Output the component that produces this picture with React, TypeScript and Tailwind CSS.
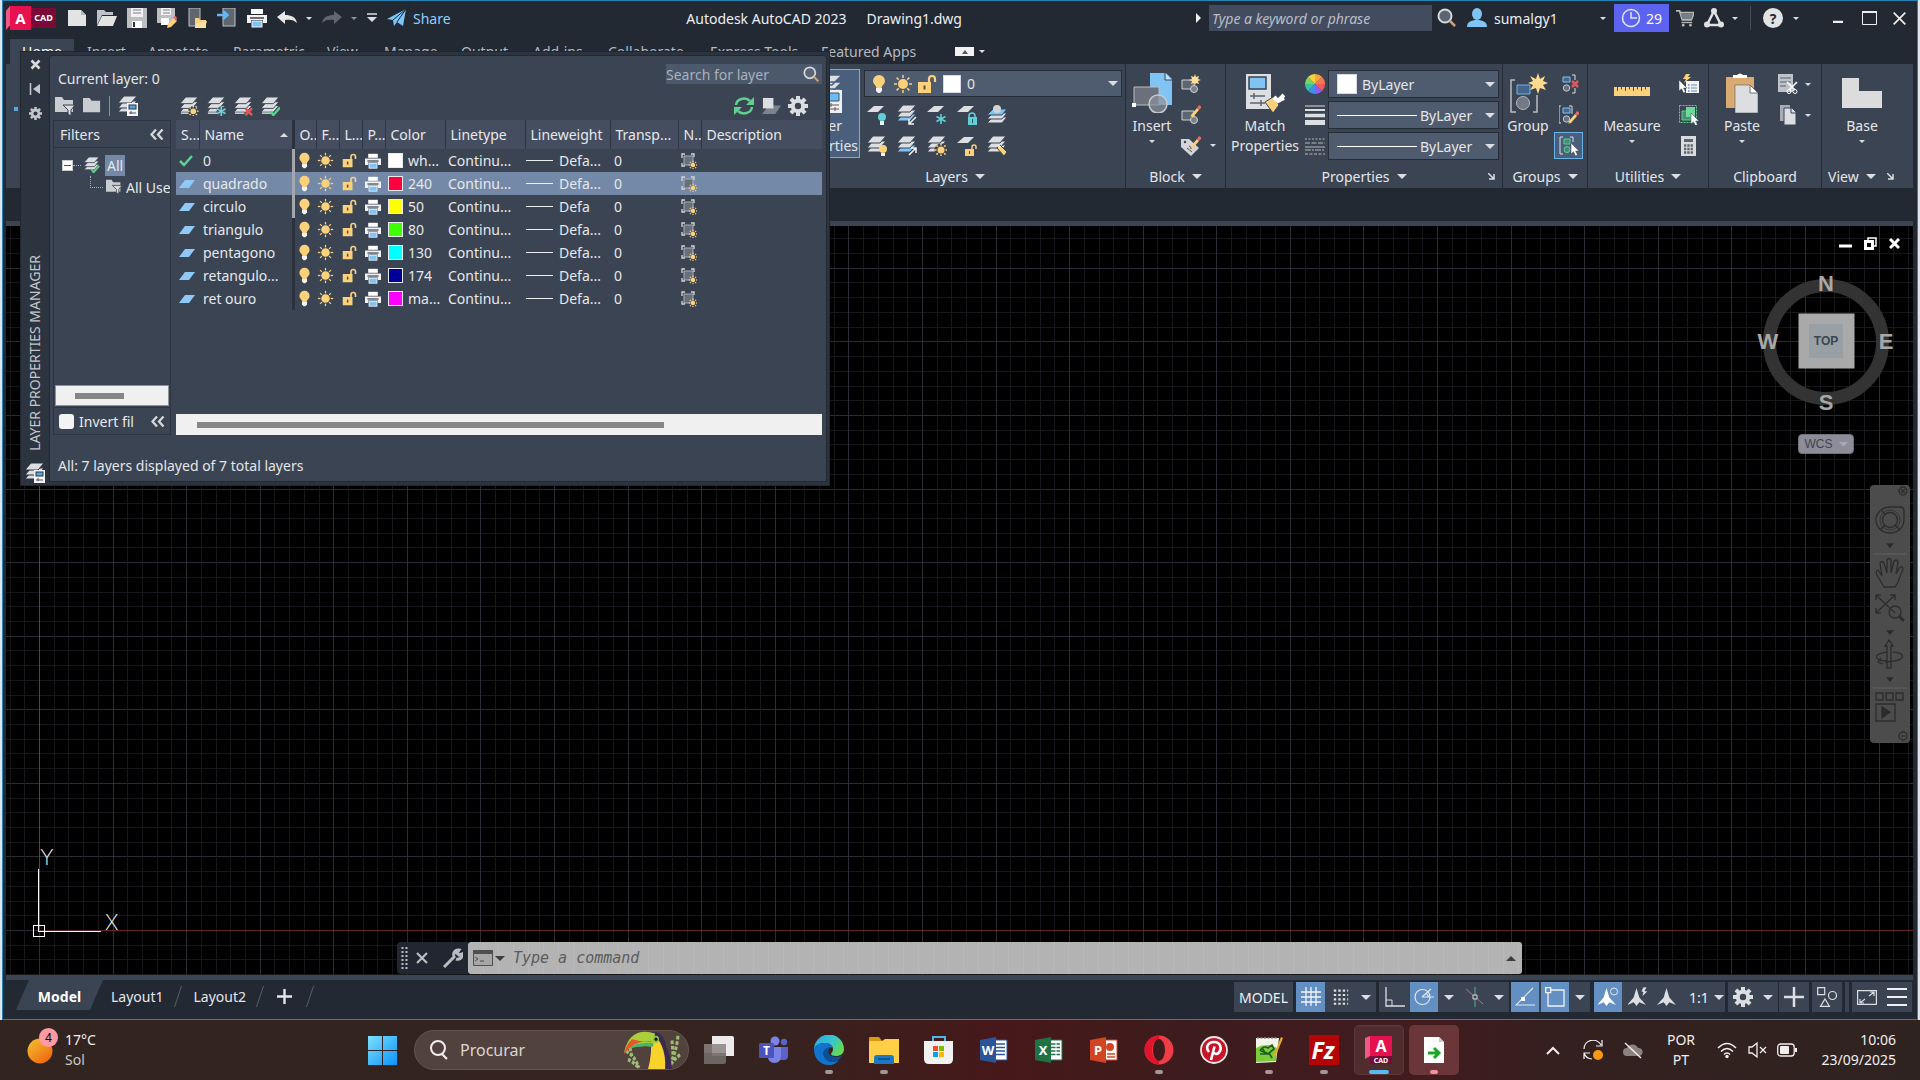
import type { ReactNode } from "react";

const FONT = "font-['Noto_Sans','Open_Sans',sans-serif]";
const LIGHT = "#dcdee1";
const AMBER = "#fcd17c";
const SKY = "#80c4f6";
const PANEL = "#3b4453";

type IconProps = { size?: number; w?: number; h?: number; vb?: string; className?: string; children?: ReactNode };

function Icon({ size = 20, w, h, vb = "0 0 20 20", className = "", children }: IconProps) {
  return (
    <svg width={w ?? size} height={h ?? size} viewBox={vb} className={`shrink-0 ${className}`} fill="none" aria-hidden="true">
      {children}
    </svg>
  );
}

function Caret({ w = 10, color = LIGHT, className = "" }: { w?: number; color?: string; className?: string }) {
  return (
    <svg width={w} height={w / 2} viewBox="0 0 10 5" className={`shrink-0 ${className}`} aria-hidden="true">
      <path d="M0 0h10L5 5z" fill={color} />
    </svg>
  );
}

/* ---------- shared glyphs ---------- */

function Sheets({ top = LIGHT, mid = LIGHT, low = LIGHT, bg = PANEL }: { top?: string; mid?: string; low?: string; bg?: string }) {
  return (
    <g stroke={bg} strokeWidth="1">
      <path d="M6 9h13l-6 7H0z" fill={low} />
      <path d="M6 5h13l-6 7H0z" fill={mid} />
      <path d="M6 0h13l-6 7H0z" fill={top} />
    </g>
  );
}

function Bulb({ size = 18 }: { size?: number }) {
  return (
    <Icon size={size}>
      <path d="M10 1a6 6 0 0 1 6 6c0 3-3 4-3.5 7h-5C7 11 4 10 4 7a6 6 0 0 1 6-6z" fill={AMBER} />
      <path d="M7 14h6v3l-2 2H9l-2-2z" fill="#f3f3f3" />
    </Icon>
  );
}

function SunShape({ cx = 10, cy = 10, r = 5, far = 9 }: { cx?: number; cy?: number; r?: number; far?: number }) {
  const rays = [0, 45, 90, 135, 180, 225, 270, 315];
  return (
    <g>
      <circle cx={cx} cy={cy} r={r} fill={AMBER} />
      {rays.map((a) => (
        <path key={a} d={`M${cx + r + 1} ${cy}H${cx + far}`} transform={`rotate(${a} ${cx} ${cy})`} stroke={AMBER} strokeWidth="1.5" />
      ))}
    </g>
  );
}

function Sun({ size = 18 }: { size?: number }) {
  return (
    <Icon size={size}>
      <SunShape />
    </Icon>
  );
}

function OpenLock({ size = 18 }: { size?: number }) {
  return (
    <Icon size={size}>
      <path d="M12 9V5a3 3 0 0 1 6 0v3" stroke={AMBER} strokeWidth="2.2" />
      <rect x="1" y="8" width="13" height="11" fill={AMBER} />
      <path d="M7.5 11.500v4" stroke="#5b4d36" strokeWidth="2" />
    </Icon>
  );
}

function Printer({ size = 18 }: { size?: number }) {
  return (
    <Icon size={size}>
      <rect x="4" y="1" width="12" height="5" fill="#fff" />
      <path d="M0 7h20v8h-4v-3H4v3H0z" fill="#f1f2f4" />
      <path d="M3 10h14" stroke="#39424f" strokeWidth="1.5" />
      <rect x="5" y="13" width="10" height="6" fill={SKY} stroke="#f1f2f4" />
    </Icon>
  );
}

function Viewport() {
  return (
    <Icon size={16} vb="0 0 16 16">
      <path d="M3 3h9v9H3z" fill="#68707c" stroke="#a9aeb5" />
      <path d="M1 5V1h3M10 1h3v3M1 10v3h3" stroke="#d4d6d9" strokeWidth="1.3" />
      <SunShape cx={12} cy={12} r={2.2} far={4.200} />
    </Icon>
  );
}

function Gear({ size = 20, color = LIGHT }: { size?: number; color?: string }) {
  const teeth = [0, 45, 90, 135, 180, 225, 270, 315];
  return (
    <Icon size={size}>
      {teeth.map((a) => (
        <rect key={a} x="8" y="0" width="4" height="5" fill={color} transform={`rotate(${a} 10 10)`} />
      ))}
      <circle cx="10" cy="10" r="5.2" stroke={color} strokeWidth="4" />
    </Icon>
  );
}

function Magnifier({ size = 20 }: { size?: number }) {
  return (
    <Icon size={size}>
      <circle cx="8" cy="8" r="6.5" fill="#5b6472" stroke="#d5d8dc" strokeWidth="2" />
      <path d="m13 13 5 5" stroke="#c9a276" strokeWidth="2.5" />
    </Icon>
  );
}

function Cursor({ x = 0, y = 0 }: { x?: number; y?: number }) {
  return <path transform={`translate(${x} ${y})`} d="M0 0v11l2.5-2.2L4.5 13l2-1-1.8-4H8z" fill="#fff" stroke="#39424f" strokeWidth=".5" />;
}

function Pencil() {
  return (
    <g>
      <path d="m9 15 1-3 6-7 2 2-6 7z" fill={AMBER} />
      <path d="m16 5 2-3 3 2-3 3z" fill="#e8695f" />
      <path d="m9 15 .7-2 1.3 1.2z" fill="#5b4d36" />
    </g>
  );
}

function PropsCard() {
  return (
    <g>
      <rect x="9" y="7" width="11" height="13" fill="#f5f5f5" />
      <rect x="11" y="9" width="7" height="4" fill="#57a6e0" stroke="#2c3441" />
      <path d="M11 17h7M13 15v3" stroke="#4c5461" />
    </g>
  );
}

/* ---------- title bar ---------- */

function IconButton({ label, className = "", children }: { label: string; className?: string; children: ReactNode }) {
  return (
    <button type="button" aria-label={label} className={`flex shrink-0 items-center justify-center ${className}`}>
      {children}
    </button>
  );
}

function AppLogo() {
  return (
    <div className="flex h-6 w-[50px] shrink-0 items-stretch">
      <div className="w-1 bg-[#f0588a] [clip-path:polygon(0_20%,100%_0,100%_80%,0_100%)]" />
      <div className="flex w-[21px] items-center justify-center bg-[#e61250] text-[15px] font-bold text-white">A</div>
      <div className="my-0.5 flex flex-1 items-center justify-center bg-[#790a35] text-[9px] font-bold text-white">CAD</div>
    </div>
  );
}

function TitleBar() {
  return (
    <div className="flex h-[34px] shrink-0 items-center pr-[11px] pl-[3px]">
      <AppLogo />
      <div className="ml-[11px] flex items-center gap-[10px]">
        <IconButton label="New">
          <Icon><path d="M1 2h13l5 5v11H1z" fill="#e3e3e3" /><path d="M14 2v5h5" fill="#b5b8bc" /></Icon>
        </IconButton>
        <IconButton label="Open">
          <Icon><path d="M0 2h7l2 2h7v3H5L0 17z" fill="#bfc2c5" /><path d="M5 8h15l-4 10H0z" fill="#e3e3e3" /></Icon>
        </IconButton>
        <IconButton label="Save">
          <Icon><path d="M0 0h20v20H0z" fill="#bcbec1" /><path d="M4 0h12v9H4z" fill="#f2f2f2" /><path d="M6 2h8M6 5h8" stroke="#7c8086" /><path d="M5 13h10v7H5z" fill="#fff" /><path d="M7 14v5" stroke="#2c3441" strokeWidth="2" /></Icon>
        </IconButton>
        <IconButton label="Save As">
          <Icon><path d="M0 0h18v15H0z" fill="#bcbec1" /><path d="M4 0h10v7H4z" fill="#f2f2f2" /><path d="M6 2h7M6 5h7" stroke="#7c8086" /><path d="M4 10h8v7H4z" fill="#fff" /><path d="m10 20 1-4 6-6 3 3-6 6z" fill={AMBER} /><path d="m16 9 3-1 1 3-1 2z" fill="#e8695f" /></Icon>
        </IconButton>
        <IconButton label="Open from Web and Mobile">
          <Icon><rect x="2" y="0" width="11" height="18" fill="#5f6670" stroke="#bcbec1" /><path d="M8 10h4l1 2h6v8H8z" fill={AMBER} /><path d="m10 15 10-2-2 7H8z" fill="#ffe1a4" /></Icon>
        </IconButton>
        <IconButton label="Save to Web and Mobile">
          <Icon><rect x="6" y="0" width="12" height="18" fill="#5f6670" stroke="#bcbec1" /><path d="M0 7h9M6 3l4.5 4L6 11" stroke="#63b7f2" strokeWidth="2.5" /></Icon>
        </IconButton>
        <IconButton label="Plot"><Printer size={20} /></IconButton>
        <IconButton label="Undo">
          <Icon><path d="M8 3v4c6 0 11 2 12 8-3-3-6-4-12-3v4L0 9z" fill="#e8e8e8" /></Icon>
        </IconButton>
      </div>
      <Caret w={6} className="ml-[9px]" />
      <IconButton label="Redo" className="ml-[10px]">
        <Icon><path d="M12 3v4C6 7 1 9 0 15c3-3 6-4 12-3v4l8-7z" fill="#62676f" /></Icon>
      </IconButton>
      <Caret w={6} color="#8f949c" className="ml-[9px]" />
      <IconButton label="Customize Quick Access Toolbar" className="ml-[10px]">
        <Icon size={10} vb="0 0 10 10"><path d="M0 1h10" stroke={LIGHT} strokeWidth="1.5" /><path d="M0 4h10L5 9z" fill={LIGHT} /></Icon>
      </IconButton>
      <button type="button" className="ml-[10px] flex items-center gap-[6px] text-[#8fd0fb]">
        <Icon><path d="M0 11 19 1l-3 17-6-4-3 4-1-6z" fill="#7cc5f8" /><path d="m6 12 13-11-9 13" stroke="#222933" /></Icon>
        Share
      </button>
      <div className="min-w-0 flex-1" />
      <div className="flex shrink-0 gap-5 pr-[234px] text-[#eceef0]">
        <span>Autodesk AutoCAD 2023</span>
        <span>Drawing1.dwg</span>
      </div>
      <Icon w={5} h={10} vb="0 0 5 10"><path d="M0 0v10l5-5z" fill="#eceef0" /></Icon>
      <input aria-label="Search" placeholder="Type a keyword or phrase" className="ml-2 h-[26px] w-[223px] bg-[#434c5e] px-[3px] italic text-white outline-none placeholder:text-[#b9bec8]" />
      <IconButton label="Search" className="ml-[5px]"><Magnifier /></IconButton>
      <button type="button" className="ml-[10px] flex items-center gap-[7px] text-[#eceef0]">
        <Icon><ellipse cx="10" cy="6" rx="5" ry="6" fill={SKY} /><path d="M0 19c0-5 4-7 10-7s10 2 10 7z" fill={SKY} /></Icon>
        <span className="w-[99px] text-left">sumalgy1</span>
        <Caret w={6} />
      </button>
      <button type="button" className="ml-[8px] flex h-7 w-[55px] items-center justify-center gap-[5px] bg-[#5c63ee] text-white">
        <Icon><circle cx="10" cy="10" r="8.5" stroke="#e4e5fd" strokeWidth="1.5" /><path d="M10 4v6h6" stroke="#e4e5fd" strokeWidth="1.5" /></Icon>
        29
      </button>
      <IconButton label="App Store" className="ml-[7px]">
        <Icon w={18} h={18}><path d="M0 2h4l3 10h10l3-8H5" stroke="#b8b8b8" strokeWidth="2" /><path d="M5 5h14l-2 6H7z" fill="#777d85" /><path d="M6 15h12" stroke="#b8b8b8" strokeWidth="1.5" /><circle cx="8" cy="18" r="1.5" fill="#b8b8b8" /><circle cx="16" cy="18" r="1.5" fill="#b8b8b8" /></Icon>
      </IconButton>
      <IconButton label="Autodesk" className="ml-[10px]">
        <Icon><path d="M10 3 3 17h14z" stroke="#dfe1e3" strokeWidth="2.5" /><circle cx="10" cy="3" r="3" fill="#dfe1e3" /><circle cx="3" cy="16.5" r="3" fill="#dfe1e3" /><circle cx="17" cy="16.5" r="3" fill="#dfe1e3" /></Icon>
      </IconButton>
      <Caret w={6} className="ml-[8px]" />
      <div className="ml-[12px] h-6 w-px bg-[#454d59]" />
      <IconButton label="Help" className="ml-[12px] size-5 rounded-full bg-[#e2e3e5] font-bold text-[#222933]">?</IconButton>
      <Caret w={6} className="ml-[10px]" />
      <IconButton label="Minimize" className="ml-[34px]"><Icon size={10} vb="0 0 10 10"><path d="M0 9h10" stroke="#eee" strokeWidth="2.5" /></Icon></IconButton>
      <IconButton label="Maximize" className="ml-[19px]"><Icon w={15} h={14} vb="0 0 15 14"><path d="M.5 1v12.500h14V1" stroke="#eee" /><path d="M0 1h15" stroke="#eee" strokeWidth="2" /></Icon></IconButton>
      <IconButton label="Close" className="ml-[16px]"><Icon size={13} vb="0 0 13 13"><path d="m.7.7 11.600 11.600M12.300.7.7 12.300" stroke="#eee" strokeWidth="1.700" /></Icon></IconButton>
    </div>
  );
}

const TABS: [string, string][] = [
  ["Insert", "w-[61px]"],
  ["Annotate", "w-[85px]"],
  ["Parametric", "w-[94px]"],
  ["View", "w-[57px]"],
  ["Manage", "w-[77px]"],
  ["Output", "w-[72px]"],
  ["Add-ins", "w-[75px]"],
  ["Collaborate", "w-[102px]"],
  ["Express Tools", "w-[111px]"],
  ["Featured Apps", "w-[134px]"],
];

function RibbonTabs() {
  return (
    <div className="mt-[4px] flex h-[25px] shrink-0 items-stretch pl-[7px] text-[#b5bac2]">
      <button type="button" className="mr-[13px] w-[64px] bg-[#3b4453] text-white">Home</button>
      {TABS.map(([label, width]) => (
        <button key={label} type="button" className={`${width} shrink-0 text-left`}>{label}</button>
      ))}
      <div className="flex items-center gap-[5px]">
        <IconButton label="Minimize ribbon" className="h-[9px] w-[19px] bg-[#f1f1f1]">
          <svg width="6" height="4" viewBox="0 0 6 4" aria-hidden="true"><path d="M0 4h6L3 0z" fill="#555" /></svg>
        </IconButton>
        <Caret w={6} />
      </div>
    </div>
  );
}

/* ---------- ribbon ---------- */

function Launcher({ className = "" }: { className?: string }) {
  return (
    <Icon size={7} vb="0 0 7 7" className={className}><path d="m0 0 6 6M6 1v5H1" stroke={LIGHT} strokeWidth="1.5" /></Icon>
  );
}

function RibbonPanel({ title, caret = true, launcher = "", titleClass = "justify-center", width, last = false, children }: { title: string; caret?: boolean; launcher?: string; titleClass?: string; width: string; last?: boolean; children: ReactNode }) {
  return (
    <section className={`relative flex shrink-0 flex-col ${width} ${last ? "" : "border-r border-[#252c37]"}`}>
      <div className="flex h-[100px] pt-[6px]">{children}</div>
      <div className={`flex h-[24px] items-center gap-[7px] text-[#e4e6e9] ${titleClass}`}>
        {title}
        {caret && <Caret />}
        {launcher && <Launcher className={launcher} />}
      </div>
    </section>
  );
}

function BigButton({ icon, lines, caret = false, className = "" }: { icon: ReactNode; lines: string[]; caret?: boolean; className?: string }) {
  return (
    <button type="button" className={`flex flex-col items-center self-start text-[#e4e6e9] ${className}`}>
      <span className="flex h-[46px] items-center">{icon}</span>
      {lines.map((l) => (
        <span key={l} className="leading-5">{l}</span>
      ))}
      {caret && <Caret w={6} className="mt-[4px]" />}
    </button>
  );
}

const layerTools: ReactNode[] = [
  <><path d="M7 1h10l-6 6H0z" fill={LIGHT} /><circle cx="15" cy="12" r="4" fill="#5fd0d8" /><path d="M13 16h4v4h-4z" fill="#e8f8f8" /></>,
  <><Sheets mid={LIGHT} low={SKY} /><path d="m19 12-7 7M12 14v5h5" stroke="#f2f2f2" strokeWidth="1.5" /></>,
  <><path d="M7 1h10l-6 6H0z" fill={LIGHT} /><path d="M14 9v10M9.5 11.500l9 5M9.5 16.500l9-5" stroke="#5fd0d8" strokeWidth="1.6" /></>,
  <><path d="M7 1h10l-6 6H0z" fill={LIGHT} /><path d="M12 13v-2a3 3 0 0 1 6 0v2" stroke="#5fd0d8" strokeWidth="1.5" /><path d="M11 12h9v8h-9z" fill="#5fd0d8" /><path d="M15.5 14v4" stroke="#2b4d55" /></>,
  <><path d="M6 12h14l-5 6H0z" fill={LIGHT} stroke={PANEL} /><path d="M6 8h14l-5 6H0z" fill={LIGHT} stroke={PANEL} /><path d="M6 4h14l-5 6H0z" fill={SKY} stroke={PANEL} /><circle cx="10" cy="4" r="4" fill="#d0d3d6" /></>,
  <><Sheets /><circle cx="16" cy="13" r="4" fill={AMBER} /><path d="M14 17h4v3h-4z" fill="#f2f2f2" /></>,
  <><Sheets low={SKY} /><path d="m12 19 7-7M19 17v-5h-5" stroke="#f2f2f2" strokeWidth="1.5" /></>,
  <><Sheets /><circle cx="14" cy="14" r="6.5" fill={PANEL} /><SunShape cx={14} cy={14} r={3.500} far={6.500} /></>,
  <><path d="M7 1h10l-6 6H0z" fill={LIGHT} /><path d="M15 13v-2a2 2 0 0 1 4 0v2" stroke={AMBER} strokeWidth="1.5" /><path d="M8 13h9v7H8z" fill={AMBER} /><path d="M12.5 15v3" stroke="#5b4d36" /></>,
  <><Sheets /><path d="m10 12 3-3 7 7-3 4z" fill={AMBER} stroke={PANEL} /><path d="m11 9 2 2" stroke="#fff" strokeWidth="2" /></>,
];

function LayersPanel() {
  return (
    <RibbonPanel title="Layers" width="w-[341px]">
      <BigButton
        className="mt-[-1px] ml-[3px] h-[89px] w-[72px] border border-[#6bb3e6] bg-[#4a5f7b]"
        icon={<Icon size={40} vb="0 0 40 40"><path d="M14 16h24L28 26H4zM14 9h24L28 19H4zM14 2h24L28 12H4z" fill={LIGHT} stroke="#4a5f7b" strokeWidth="1.5" /><path d="M20 17h18v23H20z" fill="#f1f1f1" /><path d="M22 20h13v8H22z" fill="#6cbcf5" stroke="#44546b" /><path d="M23 32h12M23 36h12M27 30v4M31 34v4" stroke="#5a5a5a" /></Icon>}
        lines={["Layer", "Properties"]}
      />
      <div className="ml-1 flex-1 pr-[3px]">
        <div className="flex h-[27px] items-center border border-[#252c37] bg-[#4f5b6f] pr-[3px] pl-[4px]">
          <Bulb size={20} />
          <span className="ml-[4px] flex"><Sun size={20} /></span>
          <span className="ml-[4px] flex"><OpenLock size={20} /></span>
          <span className="ml-[6px] size-[18px] border border-[#d8d8e6] bg-white" />
          <select aria-label="Layer" className="ml-[6px] flex-1 appearance-none bg-transparent text-[#e4e6e9] outline-none"><option>0</option></select>
          <Caret />
        </div>
        <div className="mt-[8px] ml-[3px] grid w-[150px] grid-cols-5 gap-y-[11px]">
          {layerTools.map((g, i) => (
            <IconButton key={i} label={`Layer tool ${i + 1}`} className="justify-start!"><Icon>{g}</Icon></IconButton>
          ))}
        </div>
      </div>
    </RibbonPanel>
  );
}

function BlockPanel() {
  const blockBase = <><path d="M1 6h12v9H1z" fill="#5d6571" stroke="#d0d2d5" /><circle cx="13" cy="15" r="3.5" fill="#7a818b" stroke="#d0d2d5" /></>;
  return (
    <RibbonPanel title="Block" width="w-[100px]">
      <BigButton
        className="ml-[6px] w-10"
        caret
        icon={<Icon size={40} vb="0 0 40 40"><path d="M18 0h16l6 6v26H18z" fill={SKY} /><path d="M33 0v7h7" fill="#bfe1fa" stroke={PANEL} /><path d="M2 14h25v18H2z" fill="#6a717d" stroke="#babdc2" /><circle cx="26" cy="31" r="9" fill="#8a919b" fillOpacity=".7" stroke="#c6c8cc" strokeWidth="1.5" /><path d="M0 30h4v4H0z" fill="#fff" /></Icon>}
        lines={["Insert"]}
      />
      <div className="ml-[9px] flex flex-col gap-[11px] pt-[4px]">
        <IconButton label="Create Block"><Icon>{blockBase}<path d="m14 0 1 3 3-1-1 3 3 1-3 1 1 3-3-1-1 2-1-2-3 1 1-3-3-1 3-1-1-3 3 1z" fill="#ffdf95" /></Icon></IconButton>
        <IconButton label="Edit Block"><Icon>{blockBase}<g transform="translate(0 -2)"><Pencil /></g></Icon></IconButton>
        <IconButton label="Edit Attributes"><Icon><path d="M0 3h8l10 9-8 8L0 11z" fill="#d3d5d8" /><circle cx="4" cy="6" r="1.2" fill={PANEL} /><path d="m6 12 5 4M8 10l3 2" stroke="#4c5461" /><g transform="translate(0 -2)"><Pencil /></g></Icon></IconButton>
      </div>
      <Caret w={6} className="mt-[74px] ml-[9px]" />
    </RibbonPanel>
  );
}

function PropCombo({ label, swatch = false }: { label: string; swatch?: boolean }) {
  return (
    <div className="flex h-[28px] items-center border border-[#252c37] bg-[#4f5b6f] pr-[3px] pl-[8px]">
      {swatch ? <span className="size-5 border border-[#d8d8e6] bg-white" /> : <span className="h-px w-20 bg-white" />}
      <select aria-label={label} className={`flex-1 appearance-none bg-transparent text-[#e4e6e9] outline-none ${swatch ? "ml-[5px]" : "ml-[3px]"}`}><option>ByLayer</option></select>
      <Caret />
    </div>
  );
}

const WHEEL = ["#f9a03f", "#f7784a", "#ef5a5a", "#8e5cf0", "#3f8df0", "#35c0a0", "#7fd060", "#f4d03f"];

function PropertiesPanel() {
  return (
    <RibbonPanel title="Properties" width="w-[277px]" launcher="absolute right-[7px]">
      <BigButton
        className="w-[78px]"
        icon={<Icon size={40} vb="0 0 40 40"><path d="M1 1h25v35H1z" fill={LIGHT} /><path d="M4 4h17v12H4z" fill={SKY} stroke="#39424f" strokeWidth="1.5" /><path d="M5 23h15M5 30h15M9 20v6M16 27v6" stroke="#5b626d" strokeWidth="1.5" /><path d="m20 29 8-5 6 8-6 8z" fill={AMBER} stroke={PANEL} /><path d="m29 24 4 4 6-3M33 28l6-6" stroke="#fff" strokeWidth="4" /></Icon>}
        lines={["Match", "Properties"]}
      />
      <div className="ml-px flex flex-col gap-[11px] pt-[4px]">
        <Icon>
          {WHEEL.map((c, i) => (
            <path key={c} d="M10 10V0a10 10 0 0 1 7.1 2.9z" fill={c} transform={`rotate(${i * 45} 10 10)`} />
          ))}
        </Icon>
        <Icon><path d="M0 1h20" stroke={LIGHT} /><path d="M0 5h20" stroke={LIGHT} strokeWidth="2" /><path d="M0 10.500h20" stroke={LIGHT} strokeWidth="3.5" /><path d="M0 17.500h20" stroke={LIGHT} strokeWidth="5" /></Icon>
        <Icon><path d="M0 3h20" stroke="#b4b8be" strokeDasharray="2 1.5" /><path d="M0 7h20" stroke="#b4b8be" strokeDasharray="5 1.5" /><path d="M0 11h20" stroke="#b4b8be" /><path d="M0 14h20" stroke="#b4b8be" strokeDasharray="6 1 2 1" /><path d="M0 18h20" stroke="#b4b8be" strokeDasharray="3 1.5" /></Icon>
      </div>
      <div className="ml-[3px] flex flex-1 flex-col gap-[3px] pr-[3px]">
        <PropCombo label="Object color" swatch />
        <PropCombo label="Lineweight" />
        <PropCombo label="Linetype" />
      </div>
    </RibbonPanel>
  );
}

function GroupsPanel() {
  const pair = (c: string) => (
    <g>
      <path d="M4 3h7v5H4z" fill={c} stroke={SKY} />
      <circle cx="7.5" cy="14" r="3.2" fill="#6a717d" stroke="#c6c8cc" />
    </g>
  );
  return (
    <RibbonPanel title="Groups" width="w-[85px]">
      <BigButton
        className="ml-1 w-[42px]"
        icon={<Icon size={40} vb="0 0 40 40"><path d="M7 7H3v32h5M25 39h4V22" stroke="#babdc2" strokeWidth="1.5" /><path d="M9 12h13v9H9z" fill="#46658a" stroke="#70b4e6" /><circle cx="15" cy="30" r="6.5" fill="#737a85" stroke="#b4b8be" /><path d="m30 0 2 6 5-3-2 5 5 2-5 2 3 5-6-2-2 6-2-6-6 2 3-5-5-2 5-2-3-5 6 3z" fill="#ffda8c" /></Icon>}
        lines={["Group"]}
      />
      <div className="ml-[5px] flex flex-col items-center pt-px">
        <IconButton label="Ungroup" className="h-[26px]"><Icon>{pair("#46658a")}<path d="M13 1h3v5M16 14v5h-3" stroke={LIGHT} /><path d="m13 7 6 6M19 7l-6 6" stroke="#e05a5a" strokeWidth="2.5" /></Icon></IconButton>
        <IconButton label="Group Edit" className="mt-[5px] h-[26px]"><Icon>{pair("#46658a")}<path d="M2 1H0v17h2M10 1h3v8" stroke={LIGHT} /><g transform="translate(0 4)"><Pencil /></g></Icon></IconButton>
        <IconButton label="Group Selection On/Off" className="mt-[4px] h-[27px] w-[29px] border border-[#6bb3e6] bg-[#4a5f7b]">
          <Icon><path d="M4 1H1v17h3M11 1h3v5" stroke={LIGHT} /><path d="M5 3h6v5H5z" fill="#3f8f6c" stroke="#62c99a" /><circle cx="8" cy="13.5" r="3" fill="#3f8f6c" stroke="#62c99a" /><Cursor x={12} y={7} /></Icon>
        </IconButton>
      </div>
    </RibbonPanel>
  );
}

function UtilitiesPanel() {
  return (
    <RibbonPanel title="Utilities" width="w-[121px]">
      <BigButton
        className="ml-4 w-14"
        caret
        icon={<Icon w={36} h={9} vb="0 0 36 9" className="mb-[4px]"><path d="M0 0h36v9H0z" fill={AMBER} /><path d="M3.5 0v4M7.5 0v2.500M11.5 0v4M15.5 0v2.500M19.5 0v4M23.5 0v2.500M27.5 0v4M31.5 0v2.500" stroke="#5b4d36" /></Icon>}
        lines={["Measure"]}
      />
      <div className="ml-[19px] flex flex-col gap-[11px] pt-[4px]">
        <IconButton label="Quick Select"><Icon><path d="M7 7h13v12H7z" fill="#f4f4f4" /><path d="M12 11h6M12 14h6M12 17h6" stroke="#5b8fc0" /><path d="M9 11h1.500M9 14h1.500M9 17h1.500" stroke="#5b8fc0" strokeWidth="1.5" /><path d="m7 0-3 5h3L5 9l7-6H9l2-3z" fill={AMBER} /><Cursor x={0} y={6} /></Icon></IconButton>
        <IconButton label="Select All"><Icon><rect x=".5" y=".5" width="17" height="17" stroke="#60cf90" strokeDasharray="2 1" /><path d="M3 6h9v9H3z" fill="#4c8f70" stroke="#60cf90" /><path d="M7 2h9v10H7z" fill="#6fd89c" /><Cursor x={12} y={8} /></Icon></IconButton>
        <IconButton label="Quick Calculator"><Icon><path d="M2 0h15v20H2z" fill="#dadbdc" /><path d="M5 3h9v3H5z" fill="#5f6670" /><path d="M5 9.500h9M5 13h9M5 16.500h9" stroke="#5f6670" strokeWidth="2.4" strokeDasharray="2.3 1" /></Icon></IconButton>
      </div>
    </RibbonPanel>
  );
}

function ClipboardPanel() {
  return (
    <RibbonPanel title="Clipboard" caret={false} width="w-[113px]">
      <BigButton
        className="ml-4 w-[34px]"
        caret
        icon={<Icon w={34} h={40} vb="0 0 34 40"><path d="M1 4h28v31H1z" fill="#d9ab72" /><path d="M8 5V2h4q3-3 6 0h4v3z" fill="#fff" /><path d="M10 12h15l8 8v20H10z" fill={LIGHT} stroke={PANEL} strokeWidth=".5" /><path d="M25 12v8h8z" fill="#fff" stroke="#6c737d" /></Icon>}
        lines={["Paste"]}
      />
      <div className="ml-[19px] flex flex-col gap-[11px] pt-[4px]">
        <IconButton label="Cut" className="gap-[7px]">
          <Icon><path d="M0 0h15v18H0z" fill="#bfc2c6" /><path d="M2 4h11M2 8h11M2 12h6" stroke="#59606c" /><path d="m9 8 8 8M19 8l-8 8" stroke="#fff" strokeWidth="1.7" /><circle cx="11" cy="17.5" r="2" stroke="#fff" /><circle cx="17" cy="17.5" r="2" stroke="#fff" /></Icon>
          <Caret w={6} />
        </IconButton>
        <IconButton label="Copy Clip" className="gap-[7px]">
          <Icon><path d="M2 0h10v16H2z" fill="#a9adb3" /><path d="M6 3h8l4 4v13H6z" fill={LIGHT} stroke={PANEL} /><path d="M13 3v5h5" stroke={PANEL} /></Icon>
          <Caret w={6} />
        </IconButton>
      </div>
    </RibbonPanel>
  );
}

function ViewPanel() {
  return (
    <RibbonPanel title="View" width="w-[91px]" last titleClass="pl-[6px]" launcher="ml-[4px]">
      <BigButton
        className="ml-5 w-10"
        caret
        icon={<Icon w={40} h={30} vb="0 0 40 30"><path d="M0 0h17v13h23v17H0z" fill="#dcdcdc" /></Icon>}
        lines={["Base"]}
      />
    </RibbonPanel>
  );
}

function Ribbon() {
  return (
    <div className="mr-[4px] ml-[3px] flex h-[124px] shrink-0 bg-[#3b4453]">
      <div className="flex min-w-0 flex-1 items-start pt-[43px] pl-[8px]"><span className="size-1 bg-[#5aa9e6]" /></div>
      <LayersPanel />
      <BlockPanel />
      <PropertiesPanel />
      <GroupsPanel />
      <UtilitiesPanel />
      <ClipboardPanel />
      <ViewPanel />
    </div>
  );
}

/* ---------- layer properties manager ---------- */

type Layer = { name: string; color: string; swatch: string; weight: string; current?: boolean; selected?: boolean };

const LAYERS: Layer[] = [
  { name: "0", color: "wh...", swatch: "bg-white", weight: "Defa...", current: true },
  { name: "quadrado", color: "240", swatch: "bg-[#ff003f]", weight: "Defa...", selected: true },
  { name: "circulo", color: "50", swatch: "bg-[#ffff00]", weight: "Defa" },
  { name: "triangulo", color: "80", swatch: "bg-[#3fff00]", weight: "Defa..." },
  { name: "pentagono", color: "130", swatch: "bg-[#00ffff]", weight: "Defa..." },
  { name: "retangulo...", color: "174", swatch: "bg-[#000099]", weight: "Defa..." },
  { name: "ret ouro", color: "ma...", swatch: "bg-[#ff00ff]", weight: "Defa..." },
];

const COLUMNS: [string, string][] = [
  ["S...", "w-[23px]"],
  ["Name", "w-[94px]"],
  ["O..", "w-[23px]"],
  ["F...", "w-[23px]"],
  ["L...", "w-[23px]"],
  ["P...", "w-[23px]"],
  ["Color", "w-[60px]"],
  ["Linetype", "w-[80px]"],
  ["Lineweight", "w-[85px]"],
  ["Transp...", "w-[68px]"],
  ["N..", "w-[23px]"],
  ["Description", "w-auto"],
];

function LayerTable() {
  return (
    <table className="w-full table-fixed border-collapse text-left whitespace-nowrap text-[#e6e8eb]">
      <thead>
        <tr className="h-[29px] bg-[#454e60]">
          {COLUMNS.map(([label, width], i) => (
            <th key={label} className={`overflow-hidden p-0 pl-[5px] font-normal ${width} ${i === 11 ? "" : i === 1 ? "border-r-3 border-[#2b323e]" : "border-r border-[#2f3745]"}`}>
              {i === 1 ? (
                <span className="flex items-center justify-between pr-[4px]">{label}<svg width="8" height="4" viewBox="0 0 8 4" aria-hidden="true"><path d="M0 4h8L4 0z" fill={LIGHT} /></svg></span>
              ) : label}
            </th>
          ))}
        </tr>
      </thead>
      <tbody>
        {LAYERS.map((l, i) => (
          <tr key={l.name} className={`h-[23px] leading-5 ${l.selected ? "bg-[#7489a8]" : ""}`}>
            <td className="p-0 pl-[3px]">
              {l.current ? (
                <Icon w={14} h={12} vb="0 0 14 12"><path d="m1 6 4 4 8-9" stroke="#5fd08f" strokeWidth="2.5" /></Icon>
              ) : (
                <Icon w={16} h={8} vb="0 0 16 8"><path d="M6 0h10l-6 8H0z" fill="#8ecaf5" /></Icon>
              )}
            </td>
            <td className={`p-0 pl-1 ${i < 3 ? "border-r-3 border-[#a3a6aa]" : "border-r-3 border-[#2b323e]"}`}>{l.name}</td>
            <td className="p-0 pl-px"><Bulb size={17} /></td>
            <td className="p-0 pl-px"><Sun size={17} /></td>
            <td className="p-0 pl-[3px]"><OpenLock size={15} /></td>
            <td className="p-0 pl-[3px]"><Printer size={16} /></td>
            <td className="p-0 pl-[3px]"><span className="flex items-center gap-[5px]"><span className={`size-[15px] border border-[#e9ebee] ${l.swatch}`} />{l.color}</span></td>
            <td className="p-0 pl-[3px]">Continu...</td>
            <td className="p-0 pl-px"><span className="flex items-center gap-[6px]"><span className="h-px w-[27px] bg-[#eceef0]" />{l.weight}</span></td>
            <td className="p-0 pl-1">0</td>
            <td className="p-0 pl-[3px]"><Viewport /></td>
            <td />
          </tr>
        ))}
      </tbody>
    </table>
  );
}

function Chevrons() {
  return <Icon w={14} h={11} vb="0 0 14 11"><path d="M6 .5 1.5 5.500 6 10.500M12.500.5 8 5.500l4.500 5" stroke="#d5d8dc" strokeWidth="2.3" /></Icon>;
}

function FolderShape() {
  return <path d="M0 1h7l2 3h9v12H0z" fill="#c9ccd0" />;
}

function FilterTree() {
  return (
    <div className="flex w-[118px] shrink-0 flex-col border border-[#2d3542]">
      <div className="flex h-[27px] items-center justify-between border-b border-[#2d3542] px-[6px] text-[#e4e6e9]">Filters<Chevrons /></div>
      <div className="flex-1 overflow-hidden pt-[6px] whitespace-nowrap text-[#e6e8eb]">
        <div className="flex h-[22px] items-center pl-2">
          <span className="flex size-[11px] shrink-0 items-center justify-center border border-[#c8cbd0] bg-white"><span className="h-px w-[7px] bg-[#3f4fa0]" /></span>
          <span className="w-[8px] shrink-0 border-t border-dotted border-[#a9aeb6]" />
          <span className="ml-[3px] flex shrink-0"><Icon size={16}><Sheets /><path d="m9 15 3 4 7-8" stroke="#5fd08f" strokeWidth="2.5" /></Icon></span>
          <span className="ml-[5px] bg-[#7489a8] px-[2px]">All</span>
        </div>
        <div className="flex h-[22px] items-center pl-[36px]">
          <span className="mb-[10px] h-[12px] w-[13px] shrink-0 border-b border-l border-dotted border-[#a9aeb6]" />
          <span className="ml-[3px] flex shrink-0"><Icon size={16}><FolderShape /><path d="M8 8h12l-4 5v6l-3-2v-4z" fill="#d9dbde" stroke={PANEL} /></Icon></span>
          <span className="ml-[4px] shrink-0">All Use</span>
        </div>
      </div>
      <div className="mx-px flex h-[21px] items-center border border-[#8d9299] bg-[#f0f0f0] pl-[19px]"><span className="h-[6px] w-[49px] bg-[#868686]" /></div>
      <div className="mt-px flex h-[27px] items-center justify-between border-t border-[#2d3542] px-[5px]">
        <label className="flex items-center gap-[5px] text-[#e6e8eb]">
          <input type="checkbox" className="size-[15px] appearance-none rounded-[3px] bg-[#f3f3f3]" />
          Invert fil
        </label>
        <Chevrons />
      </div>
    </div>
  );
}

function SmallSheets({ badge }: { badge: ReactNode }) {
  return <Icon size={19}><Sheets /><path d="M1 17h10" stroke={LIGHT} strokeWidth="1.5" />{badge}</Icon>;
}

function LayerPalette() {
  return (
    <section className="absolute top-[50px] left-[17px] flex h-[435px] w-[810px] border border-[#20262f] bg-[#2c3440]">
      <div className="flex w-7 shrink-0 flex-col items-center pt-[7px]">
        <IconButton label="Close palette"><Icon size={11} vb="0 0 11 11"><path d="m1.5 1.500 8 8M9.500 1.500l-8 8" stroke="#d8dadd" strokeWidth="2.6" /></Icon></IconButton>
        <IconButton label="Auto-hide" className="mt-[13px]"><Icon size={12} vb="0 0 12 12"><path d="M1.5 0v12" stroke="#c3c6cb" strokeWidth="1.6" /><path d="M11 1v10L4 6z" fill="#c3c6cb" /></Icon></IconButton>
        <IconButton label="Palette properties" className="mt-[12px]"><Gear size={13} color="#c3c6cb" /></IconButton>
        <div className="flex flex-1 items-end justify-center pb-[12px]">
          <span className="rotate-180 leading-5 whitespace-nowrap text-[#c3c6cb] [writing-mode:vertical-rl]">LAYER PROPERTIES MANAGER</span>
        </div>
        <span className="mb-[2px]"><Icon><Sheets bg="#2c3440" /><PropsCard /></Icon></span>
      </div>
      <div className="mt-[3px] mr-[2px] mb-[3px] flex min-w-0 flex-1 flex-col rounded-t-[3px] border border-[#222933] bg-[#3b4453] pt-[8px] pr-[4px] pl-[3px]">
        <div className="flex h-5 items-center pl-[5px]">
          <span className="flex-1 pt-[8px] text-[#e4e6e9]">Current layer: 0</span>
          <div className="flex h-5 w-[156px] items-center bg-[#4c586b] pr-[2px]">
            <input aria-label="Search for layer" placeholder="Search for layer" className="min-w-0 flex-1 bg-transparent text-white outline-none placeholder:text-[#aab1bc]" />
            <Magnifier size={17} />
          </div>
        </div>
        <div className="mt-[11px] flex h-[22px] items-center pl-[2px]">
          <IconButton label="New Property Filter"><Icon><FolderShape /><path d="M8 9h12l-4 5v6l-3-2v-4z" fill="#d9dbde" stroke={PANEL} /></Icon></IconButton>
          <IconButton label="New Group Filter" className="ml-[8px]"><Icon size={19}><FolderShape /></Icon></IconButton>
          <span className="ml-[7px] h-5 w-px bg-[#8b929c]" />
          <IconButton label="Layer States Manager" className="ml-[8px]"><Icon><Sheets /><PropsCard /></Icon></IconButton>
          <div className="ml-[42px] flex gap-2">
            <IconButton label="New Layer"><SmallSheets badge={<><circle cx="14" cy="15" r="5.5" fill={PANEL} /><SunShape cx={14} cy={15} r={3} far={5.500} /></>} /></IconButton>
            <IconButton label="New Layer VP Frozen"><SmallSheets badge={<><circle cx="15" cy="15" r="5" fill="#3f5a68" /><path d="M15 10v10M10.5 12.500l9 5M10.500 17.500l9-5" stroke="#7fd0dc" strokeWidth="1.5" /></>} /></IconButton>
            <IconButton label="Delete Layer"><SmallSheets badge={<path d="m12 12 7 7M19 12l-7 7" stroke="#e05a5a" strokeWidth="2.5" />} /></IconButton>
            <IconButton label="Set Current"><SmallSheets badge={<path d="m10 15 3 4 7-8" stroke="#5fd08f" strokeWidth="2.5" />} /></IconButton>
          </div>
          <div className="flex-1" />
          <IconButton label="Refresh"><Icon><path d="M2 9a8 7 0 0 1 14-4M18 11a8 7 0 0 1-14 4" stroke="#5fd08f" strokeWidth="2.5" /><path d="M20 1v8h-8zM0 19v-8h8z" fill="#5fd08f" /></Icon></IconButton>
          <IconButton label="Toggle Override Highlight" className="ml-[8px]"><Icon size={19}><path d="M7 9h13l-6 9H0z" fill="#7d838d" /><path d="M1 1h11v11H1z" fill="#dcdee1" /></Icon></IconButton>
          <IconButton label="Settings" className="mr-[14px] ml-[7px]"><Gear /></IconButton>
        </div>
        <div className="mt-[3px] flex min-h-0 flex-1">
          <FilterTree />
          <div className="ml-[5px] flex min-w-0 flex-1 flex-col">
            <LayerTable />
            <div className="flex-1" />
            <div className="flex h-[21px] items-center bg-[#f0f0f0] pl-[21px]"><span className="h-[6px] w-[467px] bg-[#868686]" /></div>
          </div>
        </div>
        <div className="flex h-[46px] shrink-0 items-center pt-[14px] pl-[5px] text-[#e4e6e9]">All: 7 layers displayed of 7 total layers</div>
      </div>
    </section>
  );
}

/* ---------- drawing area ---------- */

const PITCH = 14.716;

function DrawingGrid() {
  const vertical = Array.from({ length: 132 }, (_, i) => i - 2);
  const horizontal = Array.from({ length: 54 }, (_, i) => i - 3);
  const X0 = 33;
  const Y0 = 704;
  const mark = (k: number) => (k % 5 === 0 ? "#2b2d34" : "#16171b");
  return (
    <svg className="absolute inset-0 h-full w-full" aria-hidden="true" shapeRendering="crispEdges">
      {horizontal.map((k) => {
        const y = Y0 - Math.round(k * PITCH);
        return <path key={k} d={`M0 ${y}.5H4000`} stroke={mark(k)} />;
      })}
      {vertical.map((k) => {
        const x = X0 + Math.round(k * PITCH);
        return <path key={k} d={`M${x}.5 0V4000`} stroke={mark(k)} />;
      })}
      <path d={`M${X0}.5 0V${Y0}`} stroke="#24601f" />
      <path d={`M${X0} ${Y0}.5H4000`} stroke="#642728" />
      <path d="M32.5 643v62H95" fill="none" stroke="#fff" />
      <rect x="27.5" y="699.5" width="11" height="11" fill="none" stroke="#fff" />
      <text x="99" y="704" fill="#fff" className="font-['Inter',sans-serif] text-[21px] font-extralight">X</text>
      <text x="34" y="639" fill="#fff" className="font-['Inter',sans-serif] text-[21px] font-extralight">Y</text>
    </svg>
  );
}

function ViewCube() {
  return (
    <div className="absolute top-[43px] right-[18px] flex w-[138px] flex-col items-center font-['Liberation_Sans',Arial,sans-serif]">
      <svg width="138" height="146" viewBox="0 0 138 146" aria-hidden="true">
        <circle cx="69" cy="73" r="56.5" fill="none" stroke="#333" strokeWidth="13" />
        <g fill="#a8a8a8" textAnchor="middle" className="text-[22px] font-bold">
          <text x="69" y="22">N</text>
          <text x="69" y="141">S</text>
          <text x="11" y="80">W</text>
          <text x="129" y="80">E</text>
        </g>
        <rect x="41.5" y="44.5" width="56" height="55" fill="#a9a9a9" />
        <rect x="52" y="55" width="34" height="34" fill="#98a0a5" />
        <text x="69" y="76" textAnchor="middle" fill="#3c444c" className="text-[12px] font-bold">TOP</text>
      </svg>
      <button type="button" className="mt-[19px] flex h-5 w-14 items-center justify-center gap-[6px] rounded-[4px] border border-[#71717b] bg-[#8d8d99] text-[12px] text-[#42424a]">
        WCS<Caret w={9} color="#a9a9b4" />
      </button>
    </div>
  );
}

function NavBar() {
  return (
    <div className="absolute top-[259px] right-[3px] flex h-[258px] w-[40px] flex-col items-center rounded-[4px] bg-[#4c4c4c]">
      <svg width="40" height="258" viewBox="0 0 40 258" fill="none" stroke="#2c2c2c" strokeWidth="1.3" aria-hidden="true">
        <circle cx="33" cy="6" r="4" /><path d="m31 4 4 4M35 4l-4 4" />
        <path d="M20 22h10q4 0 4 4v9a14 13 0 1 1-14-13z" /><circle cx="20" cy="35" r="7.5" /><circle cx="20" cy="35" r="10" strokeWidth=".7" /><path d="m10 45 5-5M30 45l-5-5M12 26l3 3" />
        <path d="M17.5 59h5l-2.500 3z" fill="#222" />
        <path d="M3 69h34" stroke="#5a5a5a" />
        <path d="m14 102-7-12q-2-4 1-5l4 6-2-13q2-3 4 0l3 10V75q2-3 4 0v13l3-12q3-2 4 1l-2 12 4-7q3-1 3 2l-5 13-3 5z" />
        <path d="m6 110 19 18M25 110 6 128M6 115v-5h5M20 110h5v5M6 123v5h5" /><circle cx="25" cy="127" r="6" /><path d="m29 131 5 5" strokeWidth="3" />
        <path d="M17.5 146h5l-2.500 3z" fill="#222" />
        <path d="m15 161 4-6 4 6h-2v22h-4v-22zM17 167c-14 2-14 8 0 9M23 167c14 1 14 9-8 10M11 173l-3 4 5 2" />
        <path d="M17.5 193h5l-2.500 3z" fill="#222" />
        <path d="M3 203h34" stroke="#5a5a5a" />
        <path d="M6 208h7v7H6zM16 208h7v7h-7zM26 208h7v7h-7zM6 219h19v17H6z" /><path d="m12 222 8 5-8 6z" fill="#2c2c2c" />
        <circle cx="33" cy="251" r="4" /><path d="M31 251h4" />
      </svg>
    </div>
  );
}

function CommandLine() {
  return (
    <div className="absolute inset-x-0 bottom-px flex justify-center">
      <div className="flex h-8 w-[59%] items-stretch">
        <div className="flex w-[71px] shrink-0 items-center rounded-l-[4px] bg-[#222630] pl-[4px]">
          <svg width="7" height="22" viewBox="0 0 7 22" aria-hidden="true"><path d="M1.5 0v22M5.500 0v22" stroke="#b9bcc2" strokeWidth="2" strokeDasharray="2 2" /></svg>
          <IconButton label="Close command line" className="ml-2"><Icon size={12} vb="0 0 12 12"><path d="m1 1 10 10M11 1 1 11" stroke="#b9bcc2" strokeWidth="2.2" /></Icon></IconButton>
          <IconButton label="Customize" className="ml-[15px]"><Icon><path d="M1 19 12 8M11 8a4.500 4.500 0 0 1 5-6l-2 3 2 2 3-1a4.500 4.500 0 0 1-6 5" stroke="#b9bcc2" strokeWidth="3" /></Icon></IconButton>
        </div>
        <div className="flex flex-1 items-center rounded-[3px] bg-[#b3b3b3] bg-[repeating-linear-gradient(90deg,#b8b8b8_0_1px,transparent_1px_15px)] pr-[6px] pl-[5px]">
          <Icon w={20} h={16} vb="0 0 20 16"><path d="M.5.5h19v15H.5z" fill="#a6a6a6" stroke="#4f4f4f" /><path d="M0 0h20v4H0z" fill="#4f4f4f" /><path d="m2 7 3 2-3 2M7 11h4" stroke="#4f4f4f" /></Icon>
          <Caret w={10} color="#3c3c3c" className="ml-[2px]" />
          <input aria-label="Command" placeholder="Type a command" className="ml-[8px] min-w-0 flex-1 bg-transparent font-['DejaVu_Sans_Mono',monospace] text-[15px] italic outline-none placeholder:text-[#5b5b5b]" />
          <svg width="10" height="5" viewBox="0 0 10 5" aria-hidden="true"><path d="M0 5h10L5 0z" fill="#3c3c3c" /></svg>
        </div>
      </div>
    </div>
  );
}

function DrawingArea() {
  return (
    <main className="relative mr-[4px] ml-[3px] min-h-0 flex-1 overflow-hidden bg-black">
      <DrawingGrid />
      <div className="absolute top-[11px] right-[13px] flex items-center gap-[12px]">
        <IconButton label="Minimize drawing"><Icon size={13} vb="0 0 13 13"><path d="M0 9h13" stroke="#fff" strokeWidth="3" /></Icon></IconButton>
        <IconButton label="Restore drawing"><Icon size={13} vb="0 0 13 13"><path d="M4 3V1h8v8h-2" stroke="#fff" strokeWidth="1.5" /><path d="M1.5 4.500h7v7h-7z" stroke="#fff" strokeWidth="3" /></Icon></IconButton>
        <IconButton label="Close drawing"><Icon size={11} vb="0 0 11 11"><path d="m1 1 9 9M10 1l-9 9" stroke="#fff" strokeWidth="3" /></Icon></IconButton>
      </div>
      <ViewCube />
      <NavBar />
      <CommandLine />
    </main>
  );
}

/* ---------- status bar ---------- */

function StatusButton({ label, on = false, className = "w-[29px]", children }: { label: string; on?: boolean; className?: string; children: ReactNode }) {
  return (
    <button type="button" aria-label={label} aria-pressed={on} className={`flex h-full shrink-0 items-center justify-center ${on ? "bg-[#638fc3]" : ""} ${className}`}>
      {children}
    </button>
  );
}

function StatusGroup({ className = "", children }: { className?: string; children: ReactNode }) {
  return <div className={`flex h-[30px] shrink-0 items-center bg-[#3b4453] ${className}`}>{children}</div>;
}

const COMPASS = "M10 0 13 10l7 8-7-3-3 4-3-4-7 3 7-8z";

function Slash() {
  return <svg width="8" height="21" viewBox="0 0 8 21" aria-hidden="true"><path d="M7.5 0 .5 21" stroke="#56606f" /></svg>;
}

function StatusBar() {
  return (
    <footer className="mr-[5px] flex h-[39px] shrink-0 items-start">
      <nav className="flex h-[30px] items-center pl-[13px] text-[#e4e6e9]">
        <button type="button" className="flex h-[30px] w-[87px] items-center justify-center bg-[#3b4453] pt-[2px] font-bold text-white [clip-path:polygon(13px_0,100%_0,74px_100%,0_100%)]">Model</button>
        <button type="button" className="ml-[8px] pt-[2px]">Layout1</button>
        <span className="mt-[2px] ml-[10px]"><Slash /></span>
        <button type="button" className="ml-[12px] pt-[2px]">Layout2</button>
        <span className="mt-[2px] ml-[10px]"><Slash /></span>
        <button type="button" aria-label="New layout" className="mt-[2px] ml-[13px]"><Icon size={15} vb="0 0 15 15"><path d="M7.5 0v15M0 7.500h15" stroke="#e4e6e9" strokeWidth="2.4" /></Icon></button>
        <span className="mt-[2px] ml-[14px]"><Slash /></span>
      </nav>
      <div className="flex-1" />
      <div className="flex pt-[2px]">
        <StatusGroup className="w-[59px]"><button type="button" className="w-full text-center text-[#f0f1f3]">MODEL</button></StatusGroup>
        <StatusGroup className="ml-[3px] w-20">
          <StatusButton label="Grid" on><Icon><path d="M5 0v19M10 0v19M15 0v19M0 5h20M0 10h20M0 15h20" stroke="#f4f6f8" strokeWidth="1.3" /></Icon></StatusButton>
          <StatusButton label="Snap" className="w-[31px]"><Icon size={16}><path d="M1 2h18M1 7.500h18M1 13h18M1 18.500h18" stroke={LIGHT} strokeWidth="2.6" strokeDasharray="3 2.6" /></Icon></StatusButton>
          <Caret className="ml-[5px]" />
        </StatusGroup>
        <StatusGroup className="ml-[3px] w-[130px]">
          <StatusButton label="Ortho" className="w-[31px]"><Icon><path d="M1 0v19h19" stroke={LIGHT} strokeWidth="1.3" /><path d="M1 13h6v6" stroke={LIGHT} /></Icon></StatusButton>
          <StatusButton label="Polar" on className="w-7"><Icon><circle cx="8.5" cy="10" r="7.5" stroke="#dfe8f2" strokeWidth="1.2" /><path d="M8 10h12M8 10l9-8M12 6l3 4" stroke="#dfe8f2" strokeWidth="1.2" /></Icon></StatusButton>
          <Caret className="ml-[6px]" />
          <StatusButton label="Isodraft" className="ml-[8px] w-7"><Icon><path d="M9 0v20" stroke="#58b08a" /><path d="m0 2 17 15" stroke="#c0717b" /><path d="M7 8h4v4H7z" fill={PANEL} stroke={LIGHT} /></Icon></StatusButton>
          <Caret className="ml-[4px]" />
        </StatusGroup>
        <StatusGroup className="ml-[2px] w-[79px]">
          <StatusButton label="Object snap tracking" on className="w-7"><Icon><path d="M18 1 1 18h19" stroke="#dfe8f2" strokeWidth="1.2" /><path d="M6 10h4v4H6z" fill="#fff" /></Icon></StatusButton>
          <StatusButton label="Object snap" on className="ml-[2px] w-7"><Icon><path d="M3 3h16v16H3z" stroke="#f0f4f8" strokeWidth="1.3" /><path d="M.7.7h5v5h-5z" fill="#638fc3" stroke="#f0f4f8" strokeWidth="1.3" /></Icon></StatusButton>
          <Caret className="ml-[6px]" />
        </StatusGroup>
        <StatusGroup className="ml-[4px] w-[131px]">
          <StatusButton label="Annotation visibility" on className="w-7"><Icon><path d={COMPASS} fill="#fff" transform="translate(-1 1) scale(.95)" /><circle cx="16" cy="4.5" r="3.5" fill="#638fc3" stroke="#dfe8f2" /></Icon></StatusButton>
          <StatusButton label="Autoscale" className="w-[31px]"><Icon><path d={COMPASS} fill={LIGHT} transform="translate(-1 1) scale(.95)" /><path d="m15 0-2 5h2l-1 5 6-6h-3l2-4z" fill={LIGHT} stroke={PANEL} strokeWidth=".7" /></Icon></StatusButton>
          <StatusButton label="Annotation scale" className="w-7"><Icon><path d={COMPASS} fill={LIGHT} transform="translate(0 1) scale(.95)" /></Icon></StatusButton>
          <button type="button" className="ml-[8px] flex items-center gap-[5px] text-[#f0f1f3]">1:1<Caret /></button>
        </StatusGroup>
        <StatusGroup className="ml-[3px] w-[50px]">
          <StatusButton label="Workspace switching" className="w-[30px]"><Gear /></StatusButton>
          <Caret className="ml-[5px]" />
        </StatusGroup>
        <StatusGroup className="ml-px"><StatusButton label="Annotation monitor" className="w-[30px]"><Icon><path d="M10 0v20M0 10h20" stroke={LIGHT} strokeWidth="2.5" /></Icon></StatusButton></StatusGroup>
        <StatusGroup className="ml-[3px]"><StatusButton label="Isolate objects" className="w-[30px]"><Icon><path d="M.7.7h7v7h-7z" stroke={LIGHT} strokeWidth="1.2" /><circle cx="15.5" cy="8.5" r="4" stroke={LIGHT} strokeWidth="1.2" /><path d="m8 12 4.500 7.400h-9z" stroke={LIGHT} strokeWidth="1.2" /></Icon></StatusButton></StatusGroup>
        <StatusGroup className="ml-[3px] w-1">{null}</StatusGroup>
        <StatusGroup className="ml-[3px]">
          <StatusButton label="Clean screen" className="w-[30px]"><Icon w={20} h={15} vb="0 0 20 15"><path d="M.6.6h18.800v13.800H.6z" stroke={LIGHT} strokeWidth="1.2" /><path d="m12 6 5-4M13 2h4v4M8 9l-5 4M3 9v4h4" stroke={LIGHT} strokeWidth="1.2" /></Icon></StatusButton>
          <StatusButton label="Customization" className="w-[30px]"><Icon w={20} h={18} vb="0 0 20 18"><path d="M0 1h20M0 9h20M0 17h20" stroke="#f0f1f3" strokeWidth="2" /></Icon></StatusButton>
        </StatusGroup>
      </div>
    </footer>
  );
}

/* ---------- taskbar ---------- */

function OfficeIcon({ letter, color }: { letter: string; color: string }) {
  return (
    <svg width="28" height="28" viewBox="0 0 28 28" aria-hidden="true">
      <path d="M14 4h13v20H14z" fill="#fff" stroke={color} />
      {letter === "P" ? (
        <><circle cx="20" cy="11" r="4" fill={color} /><path d="M17 18h8M17 21h8" stroke={color} strokeWidth="1.5" /></>
      ) : (
        <path d="M16 8h9M16 11.500h9M16 15h9M16 18.500h9" stroke={color} strokeWidth="1.5" />
      )}
      {letter === "X" && <path d="M21 6v14" stroke="#fff" />}
      <path d="M0 4 16 1v26L0 24z" fill={color} />
      <text x="8" y="19" textAnchor="middle" fill="#fff" className="text-[13px] font-bold">{letter}</text>
    </svg>
  );
}

type App = { name: string; icon: ReactNode; mark?: string; box?: string };

const APPS: App[] = [
  { name: "Task View", icon: <svg width="30" height="28" viewBox="0 0 30 28"><path d="M8 0h20q2 0 2 2v18H8z" fill="#eceaea" /><path d="M0 8h22v17q0 3-3 3H0z" fill="#8a8280" fillOpacity=".85" /><path d="M0 17h22v11H0z" fill="#5d5553" fillOpacity=".5" /></svg> },
  { name: "Teams", icon: <svg width="30" height="28" viewBox="0 0 30 28"><circle cx="16" cy="5" r="4.5" fill="#7b83eb" /><circle cx="25" cy="6" r="3.2" fill="#5b62c9" /><path d="M20 11h9v9q0 4-4 4h-5z" fill="#5b62c9" /><path d="M9 11h13v9q0 7-6.500 7T9 20z" fill="#7b83eb" /><rect y="7" width="15" height="15" rx="1.5" fill="#4b53bc" /><text x="7.5" y="19" textAnchor="middle" fill="#fff" className="text-[12px] font-bold">T</text></svg> },
  { name: "Edge", mark: "w-2 bg-[#a39694]", icon: <svg width="30" height="30" viewBox="0 0 30 30"><defs><linearGradient id="edgeTop" x1="0" x2="1" y1="0" y2=".5"><stop stopColor="#2aa6e8" /><stop offset=".6" stopColor="#36c5d0" /><stop offset="1" stopColor="#62d957" /></linearGradient></defs><path d="M0 15A15 15 0 0 1 30 14c0 5-4 7-8 7-3 0-5-1-5-2s2-2 2-5-3-6-8-6C5 8 1 11 0 15z" fill="url(#edgeTop)" /><path d="M0 15c0-4 4-7 10-7 5 0 8 2 9 5-7-2-11 3-9 8s8 8 15 4c-3 4-6 5-10 5C6 30 0 23 0 15z" fill="#1273cc" /><path d="M10 21c-2-5 1-9 6-8-4 5 0 11 12 8-4 7-15 9-18 0z" fill="#0c4f96" /></svg> },
  { name: "File Explorer", mark: "w-2 bg-[#a39694]", icon: <svg width="30" height="28" viewBox="0 0 30 28"><path d="M0 2q0-1 1-1h9l3 4H0z" fill="#d99b0d" /><path d="M0 5h13l3-2h14v24H0z" fill="#ffcf48" /><path d="M5 22q0-3 3-3h14q3 0 3 3v6H5z" fill="#1a78c8" /><path d="M9 23h12" stroke="#0d5493" strokeWidth="2" /></svg> },
  { name: "Microsoft Store", icon: <svg width="30" height="30" viewBox="0 0 30 30"><path d="M9 7V2h12v5" fill="none" stroke="#4ab8e8" strokeWidth="2" /><path d="M0 6h29v18q0 5-5 5H5q-5 0-5-5z" fill="#f1f1f1" /><path d="M9 11h5v5H9z" fill="#f25022" /><path d="M15 11h5v5h-5z" fill="#7fba00" /><path d="M9 17h5v5H9z" fill="#00a4ef" /><path d="M15 17h5v5h-5z" fill="#ffb900" /></svg> },
  { name: "Word", icon: <OfficeIcon letter="W" color="#2a5699" /> },
  { name: "Excel", icon: <OfficeIcon letter="X" color="#207245" /> },
  { name: "PowerPoint", icon: <OfficeIcon letter="P" color="#d14524" /> },
  { name: "Opera", mark: "w-2 bg-[#a39694]", icon: <svg width="30" height="30" viewBox="0 0 30 30"><ellipse cx="15" cy="15" rx="14.5" ry="14.5" fill="#f03c46" /><path d="M15 .5a14.500 14.500 0 0 0 0 29V26C6 24 6 6 15 4z" fill="#e0142c" /><ellipse cx="15" cy="15" rx="6" ry="11" fill="#3d1a1b" /></svg> },
  { name: "Pinterest", icon: <svg width="28" height="28" viewBox="0 0 28 28"><circle cx="14" cy="14" r="13" fill="#c4152a" stroke="#f2e8e8" strokeWidth="1.8" /><path d="M9 16c-4-5-1-10 5-10 7 0 8 7 5 10.500-2 2-4 2-5 0M14.500 10.500 11 24" fill="none" stroke="#fff" strokeWidth="2.6" /></svg> },
  { name: "Notepad++", mark: "w-2 bg-[#a39694]", icon: <svg width="30" height="28" viewBox="0 0 30 28"><path d="M2 2h23l-3 24-20 1z" fill="#f2f6ea" /><path d="M2 12q10-6 21 0l-1 13-20 1z" fill="#7ccc3a" /><path d="M6 15q3-6 8-3l4-3 2 4-5 4 3 5M7 15l8 3M8 12l4 6M6 18h10" fill="none" stroke="#1e5e22" strokeWidth="1.7" /><path d="M3 2h20" stroke="#888" strokeWidth="1.5" strokeDasharray="2 1.5" /><path d="m20 18 7-17 2 1-7 17-3 3z" fill="#e6ad2a" /></svg> },
  { name: "FileZilla", mark: "w-2 bg-[#a39694]", icon: <svg width="30" height="30" viewBox="0 0 30 30"><path d="M0 0h30v30H0z" fill="#b40404" /><text x="14" y="24" textAnchor="middle" fill="#fff" className="text-[23px] font-bold italic">Fz</text></svg> },
  { name: "AutoCAD", mark: "w-5 bg-[#56baf4]", box: "bg-[#512c2d] border border-[#5d393a]", icon: <svg width="28" height="30" viewBox="0 0 28 30"><path d="m0 3 5-2v20l-5 3z" fill="#f0588a" /><path d="M5 1h22v20H5z" fill="#e61250" /><path d="M5 21h22v8H5z" fill="#790a35" /><text x="16" y="17" textAnchor="middle" fill="#fff" className="text-[16px] font-bold">A</text><text x="16" y="28" textAnchor="middle" fill="#fff" className="text-[7px] font-bold">CAD</text></svg> },
  { name: "Drawing export", mark: "w-2 bg-[#f4919d]", box: "bg-[#6a3639]", icon: <svg width="20" height="26" viewBox="0 0 20 26"><path d="M0 0h15l5 5v21H0z" fill="#fff" /><path d="M15 0v5h5" fill="#c9c9c9" /><path d="M4 16h10M10 11l5 5-5 5" fill="none" stroke="#18a822" strokeWidth="3" /></svg> },
];

function Toucan() {
  return (
    <svg width="60" height="38" viewBox="0 0 60 32" preserveAspectRatio="none" aria-hidden="true">
      <path d="M4 17q8 3 13 14M6 24q5 2 11 7M8 14l2 8M56 4q-2 16-10 27M58 20q-6 4-11 10M50 8l1 12" fill="none" stroke="#9cbd72" strokeWidth="3" strokeDasharray="3 1.5" />
      <path d="M28 1q14-2 16 12 5 8 6 19H26Q30 12 28 1z" fill="#3b2a4f" />
      <path d="M29 5q8 0 11 8 4 8 3 19H26q4-12 3-27z" fill="#f8d32c" />
      <path d="M33 2Q8-4 2 18q8-7 30-5z" fill="#a9cf3a" />
      <path d="M32 9Q12 7 2 20q2-9 8-13 12 3 22 2z" fill="#e5562f" />
      <path d="M31 10Q14 9 6 15q10-3 25-2z" fill="#48b56c" />
      <circle cx="34" cy="7" r="3" fill="#8bc34a" /><circle cx="34" cy="7" r="1.5" fill="#111" />
    </svg>
  );
}

function Taskbar() {
  return (
    <footer className="flex h-[60px] shrink-0 items-center bg-[linear-gradient(90deg,#32241f_0%,#35231f_40%,#471819_52%,#3d1c1d_62%,#421b1d_74%,#33201f_82%,#2f2320_100%)] text-[#f2efee]">
      <button type="button" className="relative ml-[27px] flex items-center gap-[12px] text-left leading-5">
        <svg width="26" height="30" viewBox="0 0 26 30" aria-hidden="true"><defs><linearGradient id="sunny" x1="0" x2=".8" y1="0" y2="1"><stop stopColor="#f6c431" /><stop offset="1" stopColor="#ee650f" /></linearGradient></defs><circle cx="13" cy="16" r="12.5" fill="url(#sunny)" /></svg>
        <span className="absolute top-[-2px] left-[12px] flex size-[19px] items-center justify-center rounded-full bg-[#ff99a4] text-[12px] text-black">4</span>
        <span>17°C<br /><span className="text-[#cfc9c7]">Sol</span></span>
      </button>
      <div className="min-w-0 flex-1" />
      <IconButton label="Start">
        <svg width="29" height="29" viewBox="0 0 29 29" aria-hidden="true"><defs><linearGradient id="start" x1="0" x2="1" y1="0" y2="1"><stop stopColor="#7de0fd" /><stop offset="1" stopColor="#0c93fb" /></linearGradient></defs><path d="M0 0h14v14H0zM15 0h14v14H15zM0 15h14v14H0zM15 15h14v14H15z" fill="url(#start)" /></svg>
      </IconButton>
      <div className="ml-[17px] flex h-10 w-[275px] shrink-0 items-center rounded-full border border-[#66544f] bg-[#51423e] pr-[6px] pl-[14px]">
        <Icon><circle cx="9" cy="8" r="7" stroke="#f0eeed" strokeWidth="2" /><path d="m13 14 5 5" stroke="#f0eeed" strokeWidth="2.2" /></Icon>
        <input aria-label="Procurar" placeholder="Procurar" className="ml-[11px] min-w-0 flex-1 bg-transparent text-[16px] outline-none placeholder:text-[#dcd6d4]" />
        <Toucan />
      </div>
      <div className="ml-[2px] flex h-full shrink-0">
        {APPS.map((a) => (
          <button key={a.name} type="button" aria-label={a.name} className="relative flex w-[55px] items-center justify-center">
            {a.box && <span className={`absolute top-[5px] h-[50px] w-[50px] rounded-[5px] ${a.box}`} />}
            <span className="relative">{a.icon}</span>
            {a.mark && <span className={`absolute bottom-[6px] h-1 rounded-full ${a.mark}`} />}
          </button>
        ))}
      </div>
      <div className="flex w-[459px] shrink-0 items-center justify-end pr-6">
        <Icon w={14} h={9} vb="0 0 14 9"><path d="m1 8 6-6 6 6" stroke="#f2efee" strokeWidth="2" /></Icon>
        <Icon className="ml-[23px]"><path d="M1 9a9 9 0 0 1 17-4M19 0v6h-6M1 19v-6h6M1 13a9 9 0 0 0 8 6" stroke="#f2efee" strokeWidth="1.2" /><circle cx="15" cy="15" r="5" fill="#f79b12" /></Icon>
        <Icon className="ml-5"><path d="M4 16a4 4 0 0 1 0-8 6 6 0 0 1 11 0 4 4 0 0 1 1 8z" fill="#8c8381" /><path d="m2 3 16 15" stroke="#f2efee" strokeWidth="1.4" /></Icon>
        <span className="ml-[22px] w-8 text-center leading-5">POR<br />PT</span>
        <Icon className="ml-[20px]"><path d="M1 8q9-9 18 0M4 11.500q6-6 12 0M7 14.500q3-3 6 0" stroke="#f2efee" strokeWidth="1.5" /><circle cx="10" cy="16.5" r="1.7" fill="#f2efee" /></Icon>
        <Icon className="ml-[11px]"><path d="M1 7h3l5-4v14l-5-4H1z" stroke="#f2efee" strokeWidth="1.3" /><path d="m12 7 6 6M18 7l-6 6" stroke="#f2efee" strokeWidth="1.3" /></Icon>
        <Icon className="ml-[9px]"><rect x=".7" y="4" width="16.5" height="12" rx="3" stroke="#f2efee" strokeWidth="1.3" /><rect x="3" y="6" width="9" height="8" rx="1" fill="#f2efee" /><path d="M19 8v4" stroke="#f2efee" strokeWidth="2" /></Icon>
        <span className="ml-[19px] w-[80px] text-right leading-5">10:06<br />23/09/2025</span>
      </div>
    </footer>
  );
}

export default function App() {
  return (
    <div className={`flex h-screen flex-col overflow-hidden bg-[#dfe5ea] text-[14px] ${FONT}`}>
      <div className="relative mr-[2px] ml-[2px] flex min-h-0 flex-1 flex-col border border-[#2584b4] bg-[#222933]">
        <TitleBar />
        <RibbonTabs />
        <Ribbon />
        <div className="h-[33px] shrink-0" />
        <div className="mr-[4px] ml-[3px] h-[5px] shrink-0 bg-[#3b4453]" />
        <DrawingArea />
        <div className="mr-[4px] ml-[3px] h-[5px] shrink-0 bg-[#3b4453]" />
        <StatusBar />
        <LayerPalette />
      </div>
      <Taskbar />
    </div>
  );
}
